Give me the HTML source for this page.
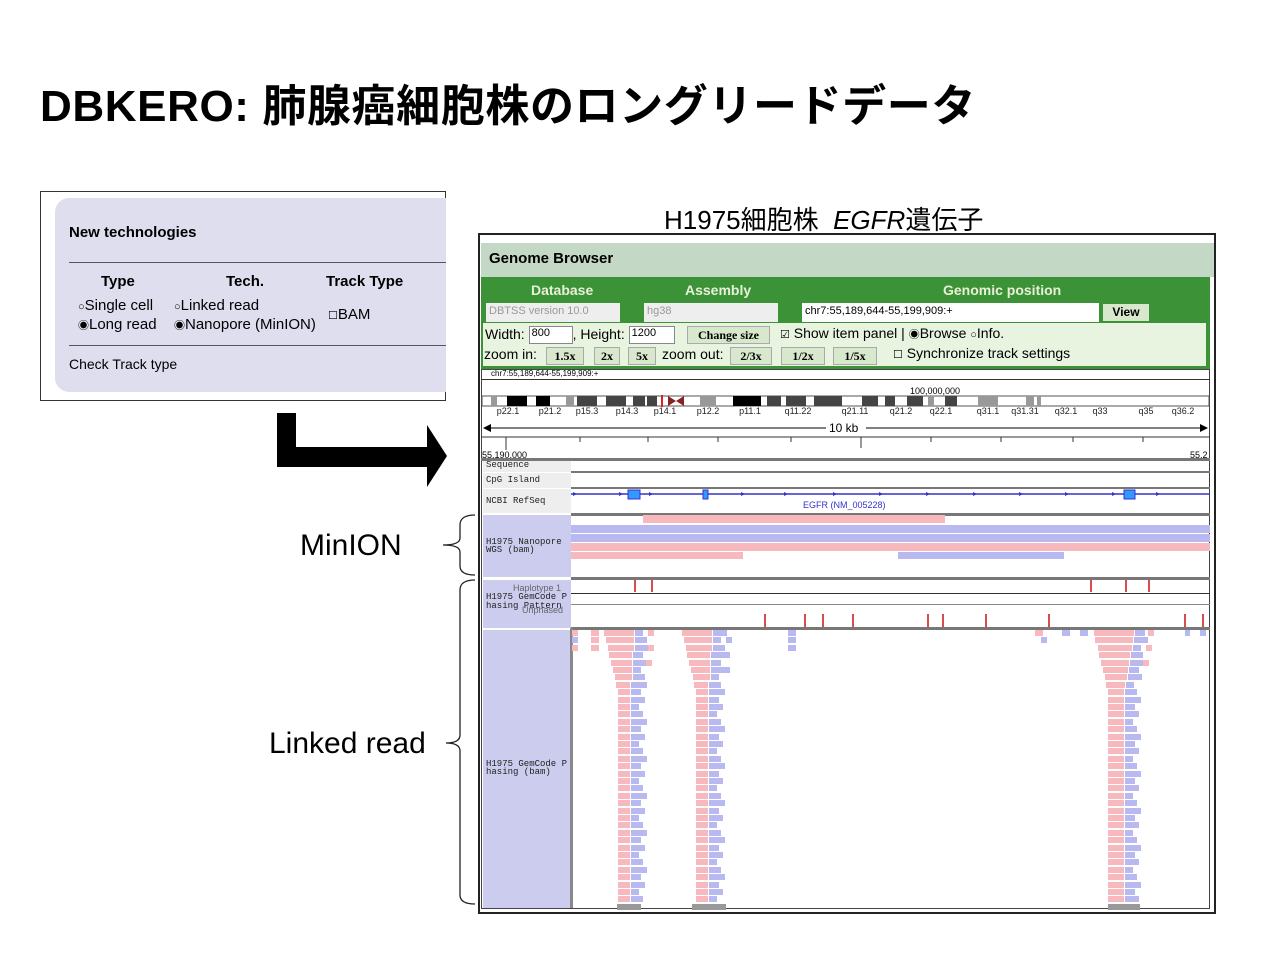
<!DOCTYPE html>
<html><head><meta charset="utf-8"><style>
*{margin:0;padding:0;box-sizing:border-box}
html,body{width:1280px;height:960px;overflow:hidden}
body{background:#fff;position:relative;font-family:"Liberation Sans","Noto Sans CJK JP",sans-serif}
.a{position:absolute}
.btn{position:absolute;background:#d8e8cc;border:1px solid #aaa;font-family:"Liberation Serif",serif;font-weight:bold;font-size:12px;text-align:center;line-height:16px;height:18px}
.lbl{position:absolute;left:483px;width:88px;background:#ccccee;font-family:"Liberation Mono",monospace;font-size:9px;color:#222;line-height:9px;padding-left:3px;overflow:hidden;white-space:nowrap}
.sep{position:absolute;left:571px;width:639px;height:3px;background:#777}
.bl{position:absolute;top:406px;font-size:9px;color:#222;transform:translateX(-50%);white-space:nowrap}
.s{font-size:11px}
</style></head><body>
<div class="a" style="left:40px;top:70px;font-size:44px;font-weight:bold;color:#000;letter-spacing:0.6px;white-space:nowrap">DBKERO: 肺腺癌細胞株のロングリードデータ</div>

<div class="a" style="left:40px;top:191px;width:406px;height:210px;border:1px solid #333"></div>
<div class="a" style="left:55px;top:198px;width:391px;height:194px;background:#dedeef;border-radius:14px 0 0 14px"></div>
<div class="a" style="left:69px;top:224px;font-size:15px;font-weight:bold">New technologies</div>
<div class="a" style="left:69px;top:262px;width:377px;height:1px;background:#555"></div>
<div class="a" style="left:101px;top:273px;font-size:15px;font-weight:bold">Type</div>
<div class="a" style="left:226px;top:273px;font-size:15px;font-weight:bold">Tech.</div>
<div class="a" style="left:326px;top:273px;font-size:15px;font-weight:bold">Track Type</div>
<div class="a" style="left:78px;top:297px;font-size:15px;line-height:17px;white-space:nowrap"><span class="s">○</span>Single cell<br><span class="s">◉</span>Long read</div>
<div class="a" style="left:174px;top:297px;font-size:15px;line-height:17px;white-space:nowrap"><span class="s">○</span>Linked read<br><span class="s">◉</span>Nanopore (MinION)</div>
<div class="a" style="left:328px;top:306px;font-size:15px"><span class="s">☐</span>BAM</div>
<div class="a" style="left:69px;top:345px;width:377px;height:1px;background:#555"></div>
<div class="a" style="left:69px;top:356px;font-size:14px">Check Track type</div>

<svg class="a" style="left:270px;top:410px" width="180" height="80"><path d="M7 3H26V37H157V15L177 46L157 77V57H7Z" fill="#000"/></svg>

<div class="a" style="left:300px;top:529px;font-size:30px">MinION</div>
<div class="a" style="left:269px;top:727px;font-size:30px">Linked read</div>
<svg class="a" style="left:440px;top:510px" width="40" height="400" fill="none" stroke="#222" stroke-width="1.3">
<path d="M35 5Q20 5 20 15V28Q20 35 3 35Q20 35 20 42V56Q20 65 35 65"/>
<path d="M35 70Q20 70 20 80V225Q20 233 6 233Q20 233 20 241V385Q20 394 35 394"/>
</svg>

<div class="a" style="left:664px;top:200px;font-size:26px;white-space:nowrap">H1975細胞株 &nbsp;<i>EGFR</i>遺伝子</div>

<div class="a" style="left:478px;top:233px;width:738px;height:681px;border:2px solid #222"></div>
<div class="a" style="left:481px;top:243px;width:733px;height:34px;background:#c3d8c5"></div>
<div class="a" style="left:489px;top:250px;font-size:15px;font-weight:bold">Genome Browser</div>
<div class="a" style="left:481px;top:277px;width:729px;height:92px;background:#3c9236"></div>
<div class="a" style="left:531px;top:282px;font-size:14px;font-weight:bold;color:#e8f0d8">Database</div>
<div class="a" style="left:685px;top:282px;font-size:14px;font-weight:bold;color:#e8f0d8">Assembly</div>
<div class="a" style="left:943px;top:282px;font-size:14px;font-weight:bold;color:#e8f0d8">Genomic position</div>
<div class="a" style="left:486px;top:303px;width:134px;height:19px;background:#eee;font-size:11px;color:#999;padding:2px 3px">DBTSS version 10.0</div>
<div class="a" style="left:644px;top:303px;width:134px;height:19px;background:#eee;font-size:11px;color:#999;padding:2px 3px">hg38</div>
<div class="a" style="left:802px;top:303px;width:297px;height:19px;background:#fff;font-size:11px;padding:2px 3px">chr7:55,189,644-55,199,909:+</div>
<div class="a" style="left:1103px;top:304px;width:46px;height:17px;background:#d8e8cc;font-size:12px;font-weight:bold;text-align:center;line-height:17px">View</div>
<div class="a" style="left:483px;top:323px;width:723px;height:43px;background:#e8f4e0"></div>
<div class="a" style="left:485px;top:326px;font-size:14px;white-space:nowrap">Width: <span style="display:inline-block;width:44px;height:18px;border:1px solid #888;background:#fff;font-size:11px;vertical-align:middle;padding-left:2px">800</span>, Height: <span style="display:inline-block;width:46px;height:18px;border:1px solid #888;background:#fff;font-size:11px;vertical-align:middle;padding-left:2px">1200</span></div>
<div class="btn" style="left:687px;top:326px;width:83px">Change size</div>
<div class="a" style="left:780px;top:325px;font-size:14px;white-space:nowrap"><span class="s">☑</span> Show item panel | <span class="s">◉</span>Browse <span class="s">○</span>Info.</div>
<div class="a" style="left:484px;top:346px;font-size:14px">zoom in:</div>
<div class="btn" style="left:546px;top:347px;width:38px">1.5x</div>
<div class="btn" style="left:594px;top:347px;width:26px">2x</div>
<div class="btn" style="left:628px;top:347px;width:28px">5x</div>
<div class="a" style="left:662px;top:346px;font-size:14px">zoom out:</div>
<div class="btn" style="left:730px;top:347px;width:42px">2/3x</div>
<div class="btn" style="left:781px;top:347px;width:44px">1/2x</div>
<div class="btn" style="left:833px;top:347px;width:44px">1/5x</div>
<div class="a" style="left:893px;top:345px;font-size:14px;white-space:nowrap"><span class="s">☐</span> Synchronize track settings</div>

<div class="a" style="left:481px;top:369px;width:729px;height:540px;border:1px solid #444;background:#fff"></div>
<div class="a" style="left:491px;top:369px;font-size:8px;white-space:nowrap">chr7:55,189,644-55,199,909:+</div>
<div class="a" style="left:481px;top:379px;width:729px;height:1px;background:#333"></div>
<div class="a" style="left:910px;top:386px;font-size:9px">100,000,000</div>
<svg class="a" style="left:481px;top:395px" width="729" height="12">
<rect x="1" y="1" width="727" height="10" fill="#fff" stroke="#555"/>
<g fill="#000"><rect x="26" y="1" width="20" height="10"/><rect x="55" y="1" width="14" height="10"/><rect x="252" y="1" width="28" height="10"/><rect x="378" y="1" width="0" height="10"/></g>
<g fill="#444"><rect x="96" y="1" width="20" height="10"/><rect x="125" y="1" width="20" height="10"/><rect x="152" y="1" width="12" height="10"/><rect x="166" y="1" width="10" height="10"/><rect x="286" y="1" width="14" height="10"/><rect x="305" y="1" width="20" height="10"/><rect x="333" y="1" width="28" height="10"/><rect x="381" y="1" width="16" height="10"/><rect x="404" y="1" width="10" height="10"/><rect x="426" y="1" width="16" height="10"/><rect x="431" y="1" width="6" height="10"/><rect x="464" y="1" width="12" height="10"/></g>
<g fill="#999"><rect x="10" y="1" width="6" height="10"/><rect x="85" y="1" width="8" height="10"/><rect x="219" y="1" width="16" height="10"/><rect x="447" y="1" width="6" height="10"/><rect x="497" y="1" width="20" height="10"/><rect x="545" y="1" width="8" height="10"/><rect x="556" y="1" width="4" height="10"/></g>
<rect x="180" y="0" width="2" height="12" fill="#d22"/><path d="M187 1L203 11V1L187 11Z" fill="#822"/>
</svg>
<div class="bl" style="left:508px">p22.1</div><div class="bl" style="left:550px">p21.2</div><div class="bl" style="left:587px">p15.3</div><div class="bl" style="left:627px">p14.3</div><div class="bl" style="left:665px">p14.1</div><div class="bl" style="left:708px">p12.2</div><div class="bl" style="left:750px">p11.1</div><div class="bl" style="left:798px">q11.22</div><div class="bl" style="left:855px">q21.11</div><div class="bl" style="left:901px">q21.2</div><div class="bl" style="left:941px">q22.1</div><div class="bl" style="left:988px">q31.1</div><div class="bl" style="left:1025px">q31.31</div><div class="bl" style="left:1066px">q32.1</div><div class="bl" style="left:1100px">q33</div><div class="bl" style="left:1146px">q35</div><div class="bl" style="left:1183px">q36.2</div>
<svg class="a" style="left:481px;top:420px" width="729" height="36">
<line x1="8" y1="8" x2="721" y2="8" stroke="#000"/><path d="M2 8L10 4V12Z M727 8L719 4V12Z" fill="#000"/>
<rect x="345" y="1" width="40" height="14" fill="#fff"/><line x1="0" y1="17" x2="729" y2="17" stroke="#333"/>
<g stroke="#333"><line x1="25" y1="17" x2="25" y2="30"/><line x1="380" y1="17" x2="380" y2="28"/><line x1="99" y1="17" x2="99" y2="22"/><line x1="167" y1="17" x2="167" y2="22"/><line x1="237" y1="17" x2="237" y2="22"/><line x1="310" y1="17" x2="310" y2="22"/><line x1="450" y1="17" x2="450" y2="22"/><line x1="520" y1="17" x2="520" y2="22"/><line x1="592" y1="17" x2="592" y2="22"/><line x1="662" y1="17" x2="662" y2="22"/></g>
</svg>
<div class="a" style="left:829px;top:421px;font-size:12px">10 kb</div>
<div class="a" style="left:482px;top:450px;font-size:9px">55,190,000</div>
<div class="a" style="left:1190px;top:450px;font-size:9px">55,2</div>

<div class="a" style="left:481px;top:458px;width:729px;height:3px;background:#777"></div>
<div class="lbl" style="top:461px;height:11px;background:#eee">Sequence</div>
<div class="sep" style="top:471px;height:2px"></div>
<div class="lbl" style="top:473px;height:15px;background:#eee;line-height:15px">CpG Island</div>
<div class="sep" style="top:487px;height:2px"></div>
<div class="lbl" style="top:489px;height:24px;background:#eee;line-height:24px">NCBI RefSeq</div>
<svg class="a" style="left:571px;top:489px" width="639" height="24">
<line x1="0" y1="5" x2="639" y2="5" stroke="#33c" stroke-width="1.5"/>
<g fill="#33c"><path d="M2 3L6 5L2 7Z M48 3L52 5L48 7Z M78 3L82 5L78 7Z M170 3L174 5L170 7Z M213 3L217 5L213 7Z M262 3L266 5L262 7Z M308 3L312 5L308 7Z M355 3L359 5L355 7Z M402 3L406 5L402 7Z M448 3L452 5L448 7Z M494 3L498 5L494 7Z M541 3L545 5L541 7Z M585 3L589 5L585 7Z"/></g>
<rect x="57" y="1" width="12" height="9" fill="#39f" stroke="#33c"/><rect x="132" y="1" width="5" height="9" fill="#39f" stroke="#33c"/><rect x="553" y="1" width="11" height="9" fill="#39f" stroke="#33c"/>
<text x="232" y="19" font-size="9" fill="#33c" font-family="Liberation Sans">EGFR (NM_005228)</text></svg>
<div class="sep" style="top:513px"></div>
<div class="lbl" style="top:515px;height:62px;padding-top:23px;line-height:8px">H1975 Nanopore<br>WGS (bam)</div>
<div class="a" style="left:643px;top:515px;width:302px;height:8px;background:#f7b8be"></div>
<div class="a" style="left:571px;top:525px;width:639px;height:8px;background:#b9b9f2"></div>
<div class="a" style="left:571px;top:534px;width:639px;height:8px;background:#b9b9f2"></div>
<div class="a" style="left:571px;top:543px;width:639px;height:8px;background:#f7b8be"></div>
<div class="a" style="left:571px;top:552px;width:172px;height:7px;background:#f7b8be"></div>
<div class="a" style="left:898px;top:552px;width:166px;height:7px;background:#b9b9f2"></div>
<div class="sep" style="top:577px"></div>
<div class="lbl" style="top:580px;height:48px;line-height:9px;padding-top:4px"><div style="color:#666;font-family:'Liberation Sans',sans-serif;font-size:9px;padding-left:27px">Haplotype 1</div>H1975 GemCode P<br>hasing Pattern<div style="color:#666;font-family:'Liberation Sans',sans-serif;font-size:9px;padding-left:36px;margin-top:-5px">Unphased</div></div>
<div class="a" style="left:571px;top:593px;width:639px;height:1px;background:#333"></div>
<div class="a" style="left:571px;top:604px;width:639px;height:1px;background:#888"></div>
<svg class="a" style="left:571px;top:580px" width="639" height="48" stroke="#c11" stroke-width="1.5">
<line x1="64" y1="0" x2="64" y2="12"/><line x1="81" y1="0" x2="81" y2="12"/><line x1="520" y1="0" x2="520" y2="12"/><line x1="555" y1="0" x2="555" y2="12"/><line x1="578" y1="0" x2="578" y2="12"/>
<g transform="translate(0,34)"><line x1="194" y1="0" x2="194" y2="13"/><line x1="234" y1="0" x2="234" y2="13"/><line x1="252" y1="0" x2="252" y2="13"/><line x1="282" y1="0" x2="282" y2="13"/><line x1="357" y1="0" x2="357" y2="13"/><line x1="372" y1="0" x2="372" y2="13"/><line x1="415" y1="0" x2="415" y2="13"/><line x1="478" y1="0" x2="478" y2="13"/><line x1="614" y1="0" x2="614" y2="13"/><line x1="632" y1="0" x2="632" y2="13"/></g></svg>
<div class="sep" style="top:627px"></div>
<div class="lbl" style="top:630px;height:278px;padding-top:130px;line-height:8px">H1975 GemCode P<br>hasing (bam)</div>
<div class="a" style="left:570px;top:628px;width:3px;height:280px;background:#888"></div>
<div id="reads"></div>
<script>
(function(){var h='',P='#f7b8be',B='#b9b9f2';
function r(x,y,w,c){h+='<div class="a" style="left:'+x+'px;top:'+y+'px;width:'+w+'px;height:6px;background:'+c+'"></div>';}
var cols=[[604,30,618,12],[682,30,696,12],[1094,40,1108,16]];
for(var i=0;i<37;i++){var y=630+i*7.4;
 cols.forEach(function(c,k){var t=Math.min(i/8,1);var x=Math.round(c[0]+(c[2]-c[0])*t);var w=Math.round(c[1]+(c[3]-c[1])*t);
  r(x,y,w,P);r(x+w+1,y,8+((i*7+k*3)%5)*2,B);if(i<6&&(i+k)%2==0)r(x+w+14,y,6,(i%2?B:P));});
 if(i<3){r(572,y,6,i%2?B:P);r(591,y,8,P);r(788,630+i*7.4,8,B);}
}
r(1035,630,8,P);r(1062,630,8,B);r(1080,630,8,B);r(1185,630,5,B);r(1200,630,6,B);r(1041,637,6,B);r(1095,637,6,P);
r(617,904,24,'#999');r(692,904,34,'#999');r(1108,904,32,'#999');
document.getElementById('reads').innerHTML=h;})();
</script>
</body></html>
